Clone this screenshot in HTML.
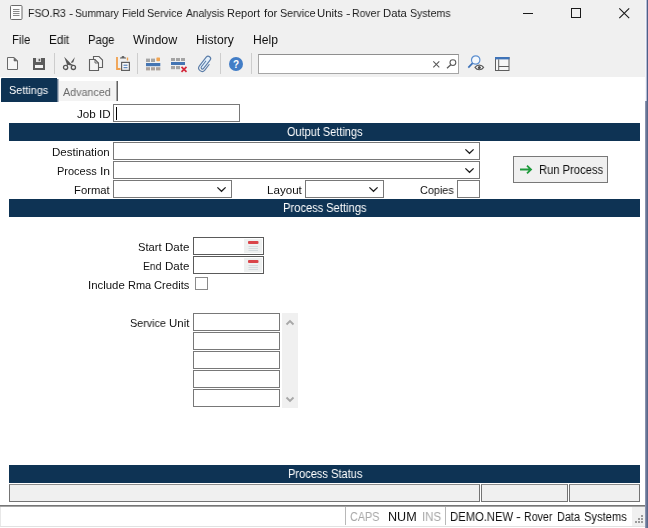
<!DOCTYPE html>
<html><head><meta charset="utf-8">
<style>
*{box-sizing:border-box;margin:0;padding:0}
html,body{width:648px;height:528px;overflow:hidden;background:#fff}
body{font-family:"Liberation Sans",sans-serif;font-size:11px;color:#222;position:relative}
.a{position:absolute}
.t{position:absolute;line-height:16px;white-space:nowrap;will-change:transform;transform-origin:0 0}
.hdr{position:absolute;left:9px;width:631px;height:18px;background:#0e3354}
.inp{position:absolute;background:#fff;border:1px solid #787878;height:18px}
.sb{position:absolute;background:#f0f0f0;border:1px solid #747474;border-top-color:#8c8c8c;height:18px;top:484px}
.sep{position:absolute;top:53px;width:1px;height:21px;background:#cdcdcd}
svg{position:absolute;overflow:visible}
</style></head><body>
<div class="a" style="left:0;top:0;width:648px;height:77px;background:#f0f0f0"></div>
<!-- title icon -->
<svg style="left:10px;top:5px" width="13" height="15" viewBox="0 0 13 15"><rect x="0.5" y="0.5" width="11.5" height="14" fill="#fdfdfd" stroke="#6b6b6b" rx="1"/><path d="M3 4.5h6.5M3 6.5h6.5M3 8.5h6.5M3 10.5h6.5" stroke="#8a8a8a" stroke-width="1"/></svg>
<!-- window buttons -->
<div class="a" style="left:523px;top:13px;width:10px;height:1px;background:#1a1a1a"></div>
<div class="a" style="left:571px;top:8px;width:10px;height:10px;border:1px solid #1a1a1a"></div>
<svg style="left:619px;top:8px" width="11" height="11" viewBox="0 0 11 11"><path d="M0.3 0.3L10.2 10.2M10.2 0.3L0.3 10.2" stroke="#1a1a1a" stroke-width="1.1" fill="none"/></svg>
<!-- toolbar icons -->
<svg style="left:7px;top:57px" width="11" height="13" viewBox="0 0 11 13"><path d="M0.5 0.5H7L10.5 4V12.5H0.5Z" fill="#f6f6f6" stroke="#6a6a6a"/><path d="M7 0.5V4H10.5Z" fill="#6a6a6a" stroke="#6a6a6a" stroke-width="0.6"/></svg>
<svg style="left:33px;top:58px" width="12" height="12" viewBox="0 0 12 12"><path d="M0 0H12V12H0Z" fill="#5c5c5c"/><rect x="3" y="0" width="5" height="4" fill="#e4e4e4"/><rect x="5.6" y="0.8" width="1.6" height="2.4" fill="#5c5c5c"/><rect x="2" y="7" width="8" height="3" fill="#f4f4f4"/></svg>
<div class="sep" style="left:54px"></div>
<svg style="left:63px;top:57px" width="13" height="13" viewBox="0 0 13 13"><path d="M1.200 -0.200L8.900 7.700L7.600 8.600L4 7.500Z" fill="#555"/><path d="M11.900 -0.100L10.300 5.200L8.300 6L8.200 5Z" fill="#555"/><path d="M4.800 7.400L3.600 8.800M8.400 7.400L9.600 8.800" stroke="#555" stroke-width="1.400"/><circle cx="2.600" cy="10.400" r="2.100" fill="none" stroke="#555" stroke-width="1.300"/><circle cx="10.400" cy="10.400" r="2.100" fill="none" stroke="#555" stroke-width="1.300"/></svg>
<svg style="left:89px;top:56px" width="14" height="15" viewBox="0 0 14 15"><path d="M4.500 0.500H10L13.500 4V11.500H4.500Z" fill="#f4f4f4" stroke="#606060" stroke-width="1.100"/><path d="M0.500 3.500H6L9.500 7V14.500H0.500Z" fill="#f4f4f4" stroke="#606060" stroke-width="1.100"/><path d="M6 3.500V7H9.500" fill="none" stroke="#606060" stroke-width="0.900"/></svg>
<svg style="left:116px;top:55px" width="14" height="16" viewBox="0 0 14 16"><path d="M1 2V14H4.500" stroke="#f0a04e" stroke-width="1.800" fill="none"/><path d="M4 3.600V2.400H5.400C5.600 0.400 8.400 0.400 8.600 2.400H10V3.600Z" fill="#606060"/><path d="M11.500 2.500V5.500" stroke="#f0a04e" stroke-width="1.400"/><rect x="5.600" y="7.400" width="7.800" height="8" fill="#f8f8f8" stroke="#606060" stroke-width="1.200"/><path d="M7.500 10.200h4M7.500 12.700h4" stroke="#3f6fae" stroke-width="1"/></svg>
<div class="sep" style="left:137px"></div>
<svg style="left:146px;top:57px" width="15" height="14" viewBox="0 0 15 14"><rect x="0" y="1.6" width="4" height="3.4" fill="#a4a4a4"/><rect x="5" y="1.6" width="4" height="3.4" fill="#a4a4a4"/><rect x="10.400" y="0.400" width="3.600" height="3.800" fill="#f0a452" rx="0.600"/><rect x="0" y="6" width="14.3" height="3.2" fill="#4475b3"/><rect x="0" y="10.2" width="4" height="3.2" fill="#aca29c"/><rect x="5" y="10.2" width="4" height="3.2" fill="#aca29c"/><rect x="10" y="10.2" width="4.3" height="3.2" fill="#aca29c"/></svg>
<svg style="left:171px;top:58px" width="16" height="14" viewBox="0 0 16 14"><rect x="0" y="0" width="4" height="3" fill="#a4a4a4"/><rect x="5" y="0" width="4" height="3" fill="#a4a4a4"/><rect x="10" y="0" width="4" height="3" fill="#a4a4a4"/><rect x="0" y="4" width="14" height="3" fill="#4475b3"/><rect x="0" y="8" width="4" height="3.2" fill="#a4a4a4"/><rect x="5" y="8" width="4" height="3.2" fill="#a4a4a4"/><path d="M10.5 8.8L15.5 13.8M15.5 8.8L10.5 13.8" stroke="#d4283c" stroke-width="1.7"/></svg>
<svg style="left:197px;top:55px" width="16" height="18" viewBox="0 0 16 18"><g transform="translate(8.200 9) rotate(38)"><path d="M-3.400 5V-6A2.450 2.450 0 0 1 1.500 -6V4.500A1.400 1.400 0 0 1 -1.300 4.500Z" fill="#e2effb" stroke="none"/><path d="M3.400 -2V5A3.400 3.400 0 0 1 -3.400 5V-6A2.450 2.450 0 0 1 1.500 -6V4.500A1.400 1.400 0 0 1 -1.300 4.500V-2.500" fill="none" stroke="#5b7da8" stroke-width="1.150" stroke-linecap="round"/></g></svg>
<div class="sep" style="left:220px"></div>
<svg style="left:229px;top:57px" width="14" height="14" viewBox="0 0 14 14"><circle cx="7" cy="7" r="7" fill="#427dc6"/><text x="7" y="11" font-family="Liberation Sans, sans-serif" font-weight="bold" font-size="10" fill="#fff" text-anchor="middle">?</text></svg>
<div class="sep" style="left:251px"></div>
<div class="a" style="left:258px;top:54px;width:201px;height:20px;background:#fff;border:1px solid #a6a6a6;border-top-color:#8f8f8f"></div>
<svg style="left:433px;top:61px" width="7" height="7" viewBox="0 0 7 7"><path d="M0.3 0.3L6.3 6.3M6.3 0.3L0.3 6.3" stroke="#5a5a5a" stroke-width="1.1"/></svg>
<svg style="left:446px;top:59px" width="11" height="10" viewBox="0 0 11 10"><circle cx="6.900" cy="3.600" r="2.900" fill="none" stroke="#5a5a5a" stroke-width="1.1"/><path d="M4.800 5.700L1 9.300" stroke="#5a5a5a" stroke-width="1.300"/></svg>
<svg style="left:467px;top:55px" width="18" height="17" viewBox="0 0 18 17"><circle cx="8.700" cy="5" r="4.200" fill="#f4f8fc" stroke="#5b8ed0" stroke-width="1.200"/><path d="M5.600 8.200L1.300 12.700" stroke="#3f73b8" stroke-width="1.700"/><path d="M8 12.400C10 9.300 14.600 9.300 16.600 12.400C14.600 15.500 10 15.500 8 12.400Z" fill="#fff" stroke="#5a5a5a" stroke-width="1.100"/><circle cx="12.300" cy="12.400" r="1.500" fill="#4a4a4a"/></svg>
<svg style="left:495px;top:57px" width="15" height="14" viewBox="0 0 15 14"><rect x="0.500" y="0.500" width="13.500" height="13" fill="#f6f6f6" stroke="#5e5e5e" stroke-width="1"/><rect x="0" y="0" width="14.500" height="2.400" fill="#3f73b8"/><path d="M3.700 2.400V13.500M3.700 9.500H14" stroke="#5e5e5e" stroke-width="1" fill="none"/></svg>
<!-- tabs -->
<div class="a" style="left:1px;top:78px;width:56px;height:24px;background:#0e3354;border-radius:1px 0 0 0"></div>
<div class="a" style="left:57px;top:79px;width:1px;height:23px;background:#64788f"></div>
<div class="a" style="left:58px;top:79px;width:1px;height:23px;background:#b4bdc8"></div>
<div class="a" style="left:59px;top:81px;width:57px;height:20px;background:#f3f3f3"></div>
<div class="a" style="left:116px;top:81px;width:1px;height:20px;background:#a8a8a8"></div><div class="a" style="left:117px;top:81px;width:1px;height:20px;background:#626262"></div>
<!-- job id -->
<div class="inp" style="left:113px;top:104px;width:127px"></div>
<div class="a" style="left:116px;top:107px;width:1px;height:13px;background:#000"></div>
<!-- output settings -->
<div class="hdr" style="top:123px"></div>
<div class="inp" style="left:113px;top:142px;width:367px"></div>
<div class="inp" style="left:113px;top:161px;width:367px"></div>
<div class="inp" style="left:113px;top:180px;width:119px"></div>
<div class="inp" style="left:305px;top:180px;width:79px"></div>
<div class="inp" style="left:457px;top:180px;width:23px"></div>
<svg style="left:465px;top:149px" width="9" height="5" viewBox="0 0 9 5"><path d="M0.400 0.400L4.500 4.300L8.600 0.400" stroke="#1e1e1e" stroke-width="1.300" fill="none"/></svg>
<svg style="left:465px;top:168px" width="9" height="5" viewBox="0 0 9 5"><path d="M0.400 0.400L4.500 4.300L8.600 0.400" stroke="#1e1e1e" stroke-width="1.300" fill="none"/></svg>
<svg style="left:217px;top:187px" width="9" height="5" viewBox="0 0 9 5"><path d="M0.400 0.400L4.500 4.300L8.600 0.400" stroke="#1e1e1e" stroke-width="1.300" fill="none"/></svg>
<svg style="left:369px;top:187px" width="9" height="5" viewBox="0 0 9 5"><path d="M0.400 0.400L4.500 4.300L8.600 0.400" stroke="#1e1e1e" stroke-width="1.300" fill="none"/></svg>
<!-- run button -->
<div class="a" style="left:513px;top:156px;width:95px;height:27px;background:#f0f0f0;border:1px solid #787878"></div>
<svg style="left:520px;top:165px" width="12" height="9" viewBox="0 0 12 9"><path d="M0 4.500H10.500M7 0.700L11 4.500L7 8.300" stroke="#1f9a3c" stroke-width="1.800" fill="none"/></svg>
<!-- process settings -->
<div class="hdr" style="top:199px"></div>
<div class="inp" style="left:193px;top:237px;width:71px;border-color:#5a5a5a"></div>
<div class="inp" style="left:193px;top:256px;width:71px;border-color:#5a5a5a"></div>
<div class="a" style="left:244px;top:239px;width:18px;height:14px;background:#eef0f0"></div>
<div class="a" style="left:244px;top:258px;width:18px;height:14px;background:#eef0f0"></div>
<svg style="left:248px;top:240px" width="11" height="13" viewBox="0 0 11 13"><rect x="0" y="1" width="10.500" height="3" rx="1" fill="#d9454a"/><path d="M0.500 6.500h9.500M0.500 8.500h9.500M0.500 10.500h9.500" stroke="#d3dadd" stroke-width="1.200"/></svg>
<svg style="left:248px;top:259px" width="11" height="13" viewBox="0 0 11 13"><rect x="0" y="1" width="10.500" height="3" rx="1" fill="#d9454a"/><path d="M0.500 6.500h9.500M0.500 8.500h9.500M0.500 10.500h9.500" stroke="#d3dadd" stroke-width="1.200"/></svg>
<div class="a" style="left:195px;top:277px;width:13px;height:13px;background:#fff;border:1px solid #8a8a8a"></div>
<div class="inp" style="left:193px;top:313px;width:87px"></div>
<div class="inp" style="left:193px;top:332px;width:87px"></div>
<div class="inp" style="left:193px;top:351px;width:87px"></div>
<div class="inp" style="left:193px;top:370px;width:87px"></div>
<div class="inp" style="left:193px;top:389px;width:87px"></div>
<div class="a" style="left:282px;top:313px;width:16px;height:95px;background:#f0f0f0"></div>
<svg style="left:286px;top:320px" width="8" height="5" viewBox="0 0 8 5"><path d="M0.500 4.500L4 1L7.500 4.500" stroke="#a8a8a8" stroke-width="1.900" fill="none"/></svg>
<svg style="left:286px;top:397px" width="8" height="5" viewBox="0 0 8 5"><path d="M0.500 0.500L4 4L7.500 0.500" stroke="#a8a8a8" stroke-width="1.900" fill="none"/></svg>
<!-- process status -->
<div class="hdr" style="top:465px"></div>
<div class="sb" style="left:9px;width:471px"></div>
<div class="sb" style="left:481px;width:87px"></div>
<div class="sb" style="left:569px;width:71px"></div>
<!-- status bar -->
<div class="a" style="left:0;top:505px;width:645px;height:1px;background:#767676"></div>
<div class="a" style="left:0;top:506px;width:645px;height:1px;background:#a4a4a4"></div>
<div class="a" style="left:632px;top:507px;width:13px;height:19px;background:#f0f0f0"></div>
<div class="a" style="left:0;top:526px;width:645px;height:1px;background:#e2e2e2"></div>
<div class="a" style="left:0;top:507px;width:1px;height:19px;background:#e8e8e8"></div>
<div class="a" style="left:345px;top:507px;width:1px;height:18px;background:#b8b8b8"></div>
<div class="a" style="left:445px;top:507px;width:1px;height:18px;background:#b8b8b8"></div>
<svg style="left:634px;top:514px" width="10" height="10" viewBox="0 0 10 10"><g fill="#9a9a9a"><rect x="7" y="1" width="2" height="2"/><rect x="4" y="4" width="2" height="2"/><rect x="7" y="4" width="2" height="2"/><rect x="1" y="7" width="2" height="2"/><rect x="4" y="7" width="2" height="2"/><rect x="7" y="7" width="2" height="2"/></g></svg>
<!-- right border -->
<div class="a" style="left:645px;top:0;width:1px;height:101px;background:#f3f5fc"></div>
<div class="a" style="left:646px;top:0;width:1px;height:101px;background:#b4bdd4"></div>
<div class="a" style="left:647px;top:0;width:1px;height:101px;background:#4f5f88"></div>
<div class="a" style="left:645px;top:101px;width:1px;height:427px;background:#8893ae"></div>
<div class="a" style="left:646px;top:101px;width:1px;height:427px;background:#6a7798"></div>
<div class="a" style="left:647px;top:101px;width:1px;height:427px;background:#5b688a"></div>
<div id="text">
<div class="t" style="left:28px;top:5px;font-size:11px;transform:scaleX(0.953);color:#1c1c1c">FSO.R3</div>
<div class="t" style="left:69px;top:5px;font-size:11px;transform:scaleX(1.152);color:#1c1c1c">-</div>
<div class="t" style="left:75px;top:5px;font-size:11px;transform:scaleX(0.929);color:#1c1c1c">Summary</div>
<div class="t" style="left:122px;top:5px;font-size:11px;transform:scaleX(0.946);color:#1c1c1c">Field</div>
<div class="t" style="left:147px;top:5px;font-size:11px;transform:scaleX(0.969);color:#1c1c1c">Service</div>
<div class="t" style="left:186px;top:5px;font-size:11px;transform:scaleX(0.933);color:#1c1c1c">Analysis</div>
<div class="t" style="left:227px;top:5px;font-size:11px;transform:scaleX(0.988);color:#1c1c1c">Report</div>
<div class="t" style="left:264px;top:5px;font-size:11px;transform:scaleX(1.04);color:#1c1c1c">for</div>
<div class="t" style="left:280px;top:5px;font-size:11px;transform:scaleX(0.971);color:#1c1c1c">Service</div>
<div class="t" style="left:317px;top:5px;font-size:11px;transform:scaleX(1.032);color:#1c1c1c">Units</div>
<div class="t" style="left:346px;top:5px;font-size:11px;transform:scaleX(1.232);color:#1c1c1c">-</div>
<div class="t" style="left:352px;top:5px;font-size:11px;transform:scaleX(0.954);color:#1c1c1c">Rover</div>
<div class="t" style="left:383px;top:5px;font-size:11px;transform:scaleX(1.029);color:#1c1c1c">Data</div>
<div class="t" style="left:410px;top:5px;font-size:11px;transform:scaleX(0.96);color:#1c1c1c">Systems</div>
<div class="t" style="left:12px;top:32px;font-size:12px;transform:scaleX(0.947);color:#111">File</div>
<div class="t" style="left:49px;top:32px;font-size:12px;transform:scaleX(0.973);color:#111">Edit</div>
<div class="t" style="left:88px;top:32px;font-size:12px;transform:scaleX(0.944);color:#111">Page</div>
<div class="t" style="left:133px;top:32px;font-size:12px;transform:scaleX(1.037);color:#111">Window</div>
<div class="t" style="left:196px;top:32px;font-size:12px;transform:scaleX(1.013);color:#111">History</div>
<div class="t" style="left:253px;top:32px;font-size:12px;transform:scaleX(1.013);color:#111">Help</div>
<div class="t" style="left:9px;top:82px;font-size:11px;transform:scaleX(0.985);color:#fff">Settings</div>
<div class="t" style="left:63px;top:84px;font-size:11px;transform:scaleX(0.976);color:#6a6a6a">Advanced</div>
<div class="t" style="left:77px;top:106px;font-size:11px;transform:scaleX(1.057);color:#111">Job ID</div>
<div class="t" style="left:287px;top:124px;font-size:12px;transform:scaleX(0.913);color:#fff">Output Settings</div>
<div class="t" style="left:283px;top:200px;font-size:12px;transform:scaleX(0.932);color:#fff">Process</div>
<div class="t" style="left:326px;top:200px;font-size:12px;transform:scaleX(0.937);color:#fff">Settings</div>
<div class="t" style="left:288px;top:466px;font-size:12px;transform:scaleX(0.921);color:#fff">Process Status</div>
<div class="t" style="left:52px;top:144px;font-size:11px;transform:scaleX(1.049);color:#111">Destination</div>
<div class="t" style="left:57px;top:163px;font-size:11px;transform:scaleX(0.988);color:#111">Process</div>
<div class="t" style="left:100px;top:163px;font-size:11px;transform:scaleX(1.102);color:#111">In</div>
<div class="t" style="left:74px;top:182px;font-size:11px;transform:scaleX(1.025);color:#111">Format</div>
<div class="t" style="left:267px;top:182px;font-size:11px;transform:scaleX(1.055);color:#111">Layout</div>
<div class="t" style="left:420px;top:182px;font-size:11px;transform:scaleX(0.984);color:#111">Copies</div>
<div class="t" style="left:539px;top:162px;font-size:12px;transform:scaleX(0.933);color:#111">Run Process</div>
<div class="t" style="left:138px;top:239px;font-size:11px;transform:scaleX(1.016);color:#111">Start</div>
<div class="t" style="left:165px;top:239px;font-size:11px;transform:scaleX(1.051);color:#111">Date</div>
<div class="t" style="left:143px;top:258px;font-size:11px;transform:scaleX(0.941);color:#111">End</div>
<div class="t" style="left:165px;top:258px;font-size:11px;transform:scaleX(1.051);color:#111">Date</div>
<div class="t" style="left:88px;top:277px;font-size:11px;transform:scaleX(1.037);color:#111">Include</div>
<div class="t" style="left:128px;top:277px;font-size:11px;transform:scaleX(0.98);color:#111">Rma</div>
<div class="t" style="left:154px;top:277px;font-size:11px;transform:scaleX(1.013);color:#111">Credits</div>
<div class="t" style="left:130px;top:315px;font-size:11px;transform:scaleX(0.981);color:#111">Service</div>
<div class="t" style="left:169px;top:315px;font-size:11px;transform:scaleX(1.041);color:#111">Unit</div>
<div class="t" style="left:350px;top:509px;font-size:12px;transform:scaleX(0.896);color:#a6a6a6">CAPS</div>
<div class="t" style="left:388px;top:509px;font-size:12px;transform:scaleX(1.049);color:#111">NUM</div>
<div class="t" style="left:422px;top:509px;font-size:12px;transform:scaleX(0.955);color:#a6a6a6">INS</div>
<div class="t" style="left:450px;top:509px;font-size:12px;transform:scaleX(0.937);color:#111">DEMO.NEW</div>
<div class="t" style="left:516px;top:509px;font-size:12px;transform:scaleX(1.222);color:#111">-</div>
<div class="t" style="left:524px;top:509px;font-size:12px;transform:scaleX(0.887);color:#111">Rover</div>
<div class="t" style="left:557px;top:509px;font-size:12px;transform:scaleX(0.906);color:#111">Data</div>
<div class="t" style="left:584px;top:509px;font-size:12px;transform:scaleX(0.931);color:#111">Systems</div>
</div>
</body></html>
